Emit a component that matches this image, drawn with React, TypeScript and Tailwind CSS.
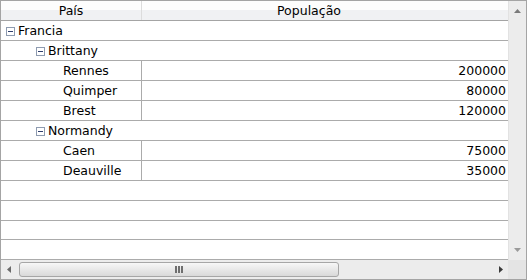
import React from "react";

type Row =
  | { kind: "group"; label: string; level: number }
  | { kind: "leaf"; label: string; value: number }
  | { kind: "empty" };

const rows: Row[] = [
  { kind: "group", label: "Francia", level: 0 },
  { kind: "group", label: "Brittany", level: 1 },
  { kind: "leaf", label: "Rennes", value: 200000 },
  { kind: "leaf", label: "Quimper", value: 80000 },
  { kind: "leaf", label: "Brest", value: 120000 },
  { kind: "group", label: "Normandy", level: 1 },
  { kind: "leaf", label: "Caen", value: 75000 },
  { kind: "leaf", label: "Deauville", value: 35000 },
  { kind: "empty" },
  { kind: "empty" },
  { kind: "empty" },
  { kind: "empty" },
];

function CollapseBox() {
  return (
    <span className="flex h-[9px] w-[9px] shrink-0 items-center justify-center border border-[#8e9bb0] bg-white">
      <span className="h-px w-[5px] bg-[#2f3f6e]" />
    </span>
  );
}

function GridRow({ row }: { row: Row }) {
  if (row.kind === "group") {
    return (
      <div
        className={`flex h-[20px] items-center gap-[3px] border-b border-[#ababab] pt-[2px] ${
          row.level === 0 ? "pl-[5px]" : "pl-[35px]"
        }`}
      >
        <CollapseBox />
        <span>{row.label}</span>
      </div>
    );
  }
  if (row.kind === "leaf") {
    return (
      <div className="flex h-[20px] border-b border-[#ababab]">
        <div className="flex w-[141px] items-center border-r border-[#ababab] pl-[62px] pt-[2px]">
          {row.label}
        </div>
        <div className="flex flex-1 items-center justify-end pr-[2px] pt-[2px]">{row.value}</div>
      </div>
    );
  }
  return <div className="h-[20px] border-b border-[#ababab]" />;
}

export default function App() {
  return (
    <div
      className="flex h-[280px] w-[527px] flex-col border border-[#a4a4a4] bg-white text-[12.5px] text-black"
      style={{ fontFamily: '"DejaVu Sans", Verdana, sans-serif' }}
    >
      <div className="flex h-[259px]">
        <div className="flex flex-1 flex-col">
          {/* column headers */}
          <div className="flex h-[20px] border-b border-[#a4a4a4] bg-gradient-to-b from-[#fdfdfd] from-50% to-[#f0f1f3] to-50%">
            <div className="flex w-[141px] items-center justify-center border-r border-[#dcdcdc] pt-[1px]">
              País
            </div>
            <div className="flex w-[334px] items-center justify-center pt-[1px]">População</div>
            <div className="flex-1" />
          </div>
          {rows.map((row, i) => (
            <GridRow key={i} row={row} />
          ))}
        </div>
        {/* vertical scrollbar */}
        <div className="flex w-[18px] flex-col items-center justify-between border-l border-[#e2e2e2] bg-[#ececec] py-[8px]">
          <svg width="7" height="4" viewBox="0 0 7 4">
            <path d="M0 4 L3.5 0 L7 4 Z" fill="#7a7a7a" />
          </svg>
          <svg width="7" height="4" viewBox="0 0 7 4">
            <path d="M0 0 L3.5 4 L7 0 Z" fill="#9a9a9a" />
          </svg>
        </div>
      </div>
      {/* horizontal scrollbar */}
      <div className="flex h-[19px]">
        <div className="flex flex-1 items-center bg-[#ececec] pl-[6px] pr-[5px]">
          <svg width="4" height="7" viewBox="0 0 4 7">
            <path d="M4 0 L0 3.5 L4 7 Z" fill="#6a6a6a" />
          </svg>
          <div className="ml-[8px] flex h-[15px] w-[320px] items-center justify-center gap-[1px] rounded-[3px] border border-[#a6a6a6] bg-gradient-to-b from-[#f7f7f7] to-[#d9d9d9]">
            <span className="h-[7px] w-[2px] bg-[#6e6e6e]" />
            <span className="h-[7px] w-[2px] bg-[#6e6e6e]" />
            <span className="h-[7px] w-[2px] bg-[#6e6e6e]" />
          </div>
          <div className="flex-1" />
          <svg width="4" height="7" viewBox="0 0 4 7">
            <path d="M0 0 L4 3.5 L0 7 Z" fill="#3a3a3a" />
          </svg>
        </div>
        <div className="w-[18px] bg-[#e4e4e4]" />
      </div>
    </div>
  );
}
